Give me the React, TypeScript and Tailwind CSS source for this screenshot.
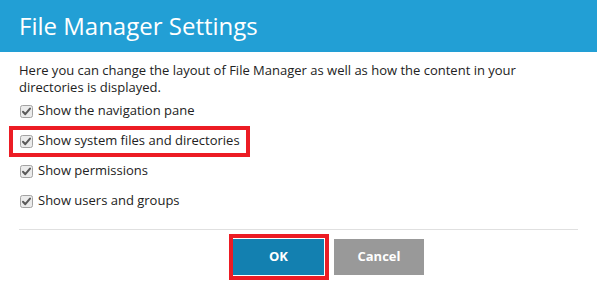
const options = [
  { label: 'Show the navigation pane', marked: false },
  { label: 'Show system files and directories', marked: true },
  { label: 'Show permissions', marked: false },
  { label: 'Show users and groups', marked: false },
]

function CheckBox() {
  return (
    <svg width="13" height="13" viewBox="0 0 13 13" className="shrink-0">
      <rect x="0.5" y="0.5" width="12" height="12" rx="2" fill="#ebebeb" stroke="#a3a3a3" />
      <path d="M3 6.8 L5.3 9.2 L10 3.6" fill="none" stroke="#5a5a5a" strokeWidth="2" strokeLinecap="round" strokeLinejoin="round" />
    </svg>
  )
}

export default function App() {
  return (
    <div className="w-[597px] h-[289px] bg-white font-['Open_Sans',sans-serif] overflow-hidden">
      <div className="h-[52px] bg-[#229fd5] flex items-center pl-[19px]">
        <h1 className="text-white text-[24px] leading-none">File Manager Settings</h1>
      </div>

      <div className="px-[19px] pt-[10px]">
        <p className="text-[13px] leading-[17px] text-[#222]">
          Here you can change the layout of File Manager as well as how the content in your directories is displayed.
        </p>

        <div className="flex flex-col">
          {options.map((o) => (
            <div key={o.label} className="relative h-[30px] flex items-center gap-[5px] pl-[1px]">
              {o.marked && (
                <span className="absolute left-[-10px] top-[0px] w-[241px] h-[31px] border-[4px] border-[#ec1c24]" />
              )}
              <CheckBox />
              <span className="text-[13px] text-[#222]">{o.label}</span>
            </div>
          ))}
        </div>

        <div className="mt-[13px] h-px bg-[#e0e0e0]" />

        <div className="flex gap-[10px] pl-[214px] mt-[9px]">
          <div className="relative">
            <span className="absolute -left-[4px] -top-[5px] -right-[5px] -bottom-[5px] border-[4px] border-[#ec1c24]" />
            <button className="relative w-[91px] h-[36px] bg-[#1380b0] text-white text-[13px] font-bold">OK</button>
          </div>
          <button className="w-[90px] h-[36px] bg-[#999999] text-white text-[13px] font-bold">Cancel</button>
        </div>
      </div>
    </div>
  )
}
